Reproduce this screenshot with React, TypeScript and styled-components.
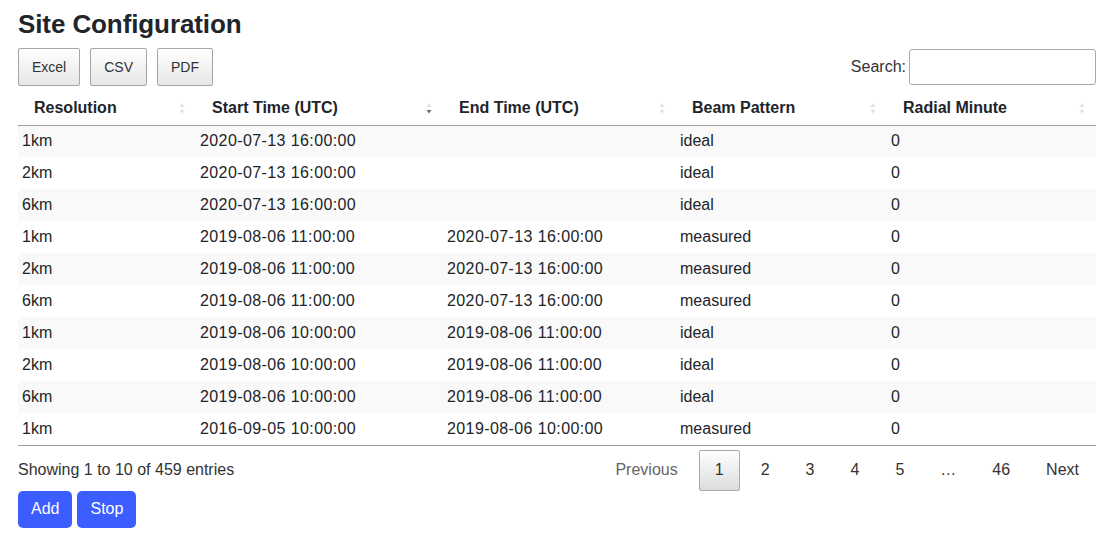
import React from "react";
import styled, { createGlobalStyle } from "styled-components";

const GlobalStyle = createGlobalStyle`
  body {
    margin: 0;
    background: #ffffff;
    font-family: "Liberation Sans", Arial, sans-serif;
    color: #212529;
  }
`;

type Row = {
  resolution: string;
  start: string;
  end: string;
  beam: string;
  minute: string;
};

const rows: Row[] = [
  { resolution: "1km", start: "2020-07-13 16:00:00", end: "", beam: "ideal", minute: "0" },
  { resolution: "2km", start: "2020-07-13 16:00:00", end: "", beam: "ideal", minute: "0" },
  { resolution: "6km", start: "2020-07-13 16:00:00", end: "", beam: "ideal", minute: "0" },
  { resolution: "1km", start: "2019-08-06 11:00:00", end: "2020-07-13 16:00:00", beam: "measured", minute: "0" },
  { resolution: "2km", start: "2019-08-06 11:00:00", end: "2020-07-13 16:00:00", beam: "measured", minute: "0" },
  { resolution: "6km", start: "2019-08-06 11:00:00", end: "2020-07-13 16:00:00", beam: "measured", minute: "0" },
  { resolution: "1km", start: "2019-08-06 10:00:00", end: "2019-08-06 11:00:00", beam: "ideal", minute: "0" },
  { resolution: "2km", start: "2019-08-06 10:00:00", end: "2019-08-06 11:00:00", beam: "ideal", minute: "0" },
  { resolution: "6km", start: "2019-08-06 10:00:00", end: "2019-08-06 11:00:00", beam: "ideal", minute: "0" },
  { resolution: "1km", start: "2016-09-05 10:00:00", end: "2019-08-06 10:00:00", beam: "measured", minute: "0" },
];

// 列の定義（幅と並び順の状態）
const columns = [
  { label: "Resolution", width: 178, sort: "none" },
  { label: "Start Time (UTC)", width: 247, sort: "desc" },
  { label: "End Time (UTC)", width: 233, sort: "none" },
  { label: "Beam Pattern", width: 211, sort: "none" },
  { label: "Radial Minute", width: 209, sort: "none" },
];

const pages = ["1", "2", "3", "4", "5", "…", "46"];

const SortIcon = ({ sort }: { sort: string }) => (
  <svg width="6" height="11" viewBox="0 0 6 11">
    <path d="M3 0.5 L5.5 4 L0.5 4 Z" fill={sort === "asc" ? "#555" : "#e0e0e0"} />
    <path d="M3 10.5 L5.5 7 L0.5 7 Z" fill={sort === "desc" ? "#6b6b6b" : "#e0e0e0"} />
  </svg>
);

export default function App() {
  return (
    <Page>
      <GlobalStyle />
      <Title>Site Configuration</Title>
      <Toolbar>
        <ExportGroup>
          <GrayButton>Excel</GrayButton>
          <GrayButton>CSV</GrayButton>
          <GrayButton>PDF</GrayButton>
        </ExportGroup>
        <SearchLabel>
          Search:
          <SearchInput type="text" />
        </SearchLabel>
      </Toolbar>
      <Table>
        <thead>
          <tr>
            {columns.map((c) => (
              <HeadCell key={c.label} style={{ width: c.width }}>
                {c.label}
                <SortSlot>
                  <SortIcon sort={c.sort} />
                </SortSlot>
              </HeadCell>
            ))}
          </tr>
        </thead>
        <tbody>
          {rows.map((r, i) => (
            <BodyRow key={i} $striped={i % 2 === 0}>
              <Cell>{r.resolution}</Cell>
              <Cell $numeric>{r.start}</Cell>
              <Cell $numeric>{r.end}</Cell>
              <Cell>{r.beam}</Cell>
              <Cell>{r.minute}</Cell>
            </BodyRow>
          ))}
        </tbody>
      </Table>
      <Footer>
        <Info>Showing 1 to 10 of 459 entries</Info>
        <Pager>
          <PageLink $muted>Previous</PageLink>
          {pages.map((p) => (
            <PageLink key={p} $current={p === "1"}>
              {p}
            </PageLink>
          ))}
          <PageLink>Next</PageLink>
        </Pager>
      </Footer>
      <Actions>
        <BlueButton>Add</BlueButton>
        <BlueButton>Stop</BlueButton>
      </Actions>
    </Page>
  );
}

const Page = styled.div`
  padding: 8px 13px 0 18px;
`;

const Title = styled.h2`
  margin: 0;
  font-size: 26px;
  font-weight: 700;
  line-height: 32px;
  color: #212529;
  letter-spacing: -0.1px;
`;

const Toolbar = styled.div`
  display: flex;
  justify-content: space-between;
  align-items: center;
  margin-top: 8px;
`;

const ExportGroup = styled.div`
  display: flex;
  gap: 10px;
`;

const GrayButton = styled.button`
  height: 38px;
  padding: 0 13px;
  font-family: "Liberation Sans", Arial, sans-serif;
  font-size: 14px;
  color: #333;
  border: 1px solid #a5a5a5;
  border-radius: 2px;
  background: linear-gradient(to bottom, #ffffff 0%, #e6e6e6 100%);
  cursor: pointer;
`;

const SearchLabel = styled.label`
  display: flex;
  align-items: center;
  gap: 3px;
  font-size: 16px;
  color: #333;
`;

const SearchInput = styled.input`
  width: 187px;
  height: 36px;
  box-sizing: border-box;
  border: 1px solid #aaa;
  border-radius: 3px;
  padding: 4px;
  font-size: 16px;
`;

const Table = styled.table`
  margin-top: 5px;
  width: 1078px;
  border-collapse: collapse;
  table-layout: fixed;
  font-size: 16px;
`;

const HeadCell = styled.th`
  position: relative;
  height: 34px;
  box-sizing: border-box;
  padding: 0 18px 0 16px;
  text-align: left;
  font-weight: 700;
  color: #212529;
  border-bottom: 1px solid #9f9f9f;
`;

const SortSlot = styled.span`
  position: absolute;
  right: 11px;
  top: 12px;
  display: flex;
`;

const BodyRow = styled.tr<{ $striped: boolean }>`
  background: ${(p) => (p.$striped ? "#f9f9f9" : "#ffffff")};
  &:last-child td {
    border-bottom: 1px solid #9f9f9f;
  }
`;

const Cell = styled.td<{ $numeric?: boolean }>`
  height: 32px;
  box-sizing: border-box;
  padding: 0 4px;
  color: #212529;
  white-space: nowrap;
  letter-spacing: ${(p) => (p.$numeric ? "0.4px" : "0")};
`;

const Footer = styled.div`
  display: flex;
  justify-content: space-between;
  align-items: center;
  width: 1078px;
  margin-top: 4px;
`;

const Info = styled.div`
  font-size: 16px;
  color: #333;
`;

const Pager = styled.div`
  display: flex;
  align-items: center;
  gap: 6px;
  padding-right: 2px;
`;

const PageLink = styled.span<{ $current?: boolean; $muted?: boolean }>`
  box-sizing: border-box;
  height: 41px;
  min-width: ${(p) => (p.$current ? "41px" : "0")};
  display: inline-flex;
  align-items: center;
  justify-content: center;
  padding: 0 14px;
  font-size: 16px;
  color: ${(p) => (p.$muted ? "#666" : "#333")};
  border: 1px solid ${(p) => (p.$current ? "#a9a9a9" : "transparent")};
  border-radius: 2px;
  background: ${(p) =>
    p.$current ? "linear-gradient(to bottom, #ffffff 0%, #dcdcdc 100%)" : "transparent"};
`;

const Actions = styled.div`
  display: flex;
  gap: 5px;
`;

const BlueButton = styled.button`
  height: 37px;
  padding: 0 13px;
  border: none;
  border-radius: 5px;
  background: #3c5dff;
  color: #ffffff;
  font-family: "Liberation Sans", Arial, sans-serif;
  font-size: 16px;
  cursor: pointer;
`;
